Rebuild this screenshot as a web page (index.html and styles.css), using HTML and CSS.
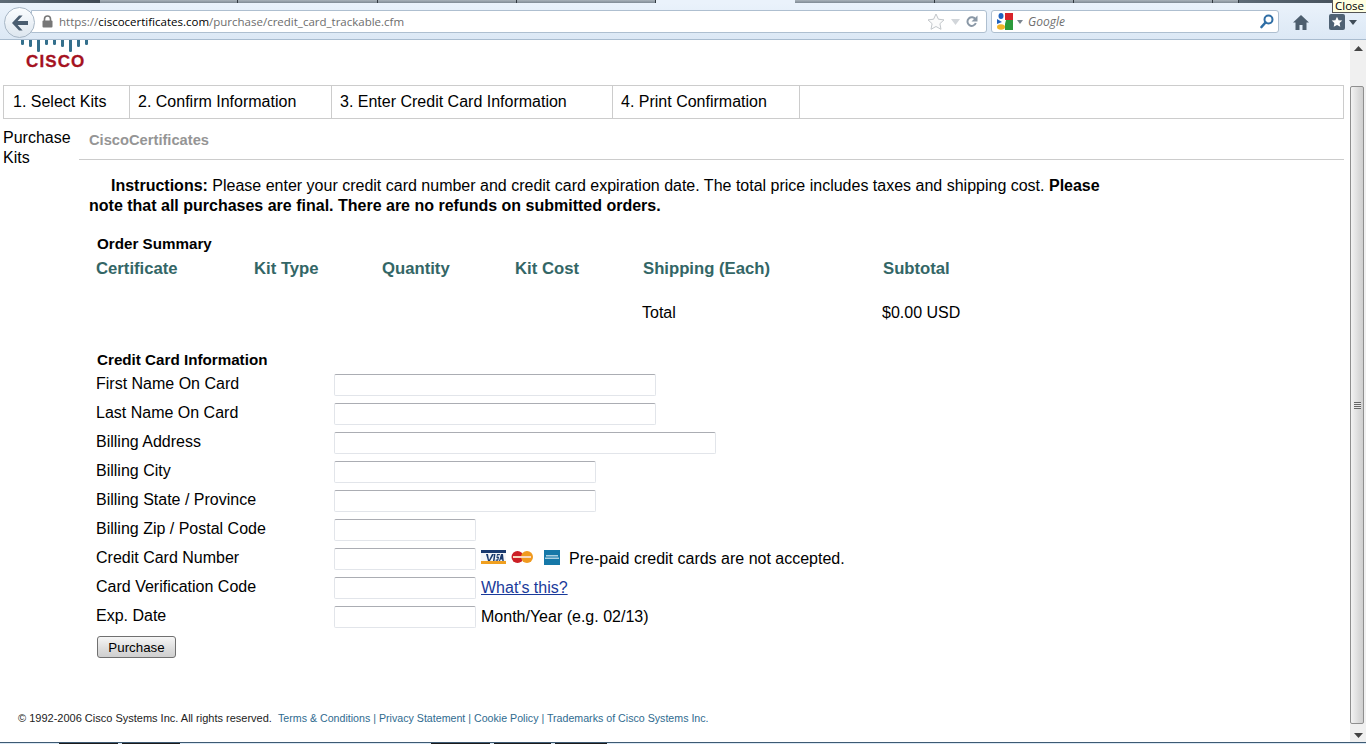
FILE: index.html
```html
<!DOCTYPE html>
<html lang="en">
<head>
<meta charset="utf-8">
<title>Purchase Kits</title>
<link rel="stylesheet" href="styles.css">
</head>
<body>
<div class="window">
  <div class="tabstrip">
    <span class="tab tab-dark w100"></span>
    <span class="tab w138"></span>
    <span class="tab w140"></span>
    <span class="tab w139"></span>
    <span class="tab w139"></span>
    <span class="tab tab-active w139"></span>
    <span class="tab w140"></span>
    <span class="tab w139"></span>
    <span class="tab w139"></span>
    <span class="tab w26"></span>
    <span class="tab tab-dark fill"></span>
  </div>
  <div class="tooltip">Close</div>
  <div class="navbar">
    <div class="back">
      <svg width="20" height="18" viewBox="0 0 20 18"><path d="M9 1.5 2 9l7 7.5h3.6L7.6 11H18V7H7.6l5-5.500z" fill="#4a5d70"/></svg>
    </div>
    <div class="urlbar">
      <svg class="lock" width="11" height="13" viewBox="0 0 11 13"><path d="M2.500 6V4a3 3 0 0 1 6 0v2" fill="none" stroke="#777" stroke-width="1.600"/><rect x="0.500" y="5.500" width="10" height="7" rx="1" fill="#777"/></svg>
      <span class="url"><span class="url-dim">https://</span>ciscocertificates.com<span class="url-dim">/purchase/credit_card_trackable.cfm</span></span>
      <svg class="star" width="18" height="17" viewBox="0 0 18 17"><path d="M9 1l2.400 5.200 5.600.7-4.100 3.800 1.100 5.600L9 13.500l-5 2.800 1.100-5.600L1 6.900l5.600-.7z" fill="#fbfbfb" stroke="#c2c6ca"/></svg>
      <svg class="drop" width="11" height="8" viewBox="0 0 11 8"><path d="M1 1h9L5.500 7z" fill="#d2d6da"/></svg>
      <svg class="reload" width="13" height="13" viewBox="0 0 13 13"><path d="M10.500 4.500A4.300 4.300 0 1 0 10.800 8" fill="none" stroke="#8a98a6" stroke-width="2"/><path d="M12.500 0.500v6h-6z" fill="#8a98a6"/></svg>
    </div>
    <div class="searchbar">
      <svg class="glogo" width="16" height="17" viewBox="0 0 16 17"><path d="M8 0h8v7H8z" fill="#d8232a"/><path d="M9 7h7v10H8v-6z" fill="#2c9a3c"/><ellipse cx="4" cy="3" rx="2.500" ry="3" fill="#1f63c0"/><path d="M0 6l5 3-5 2z" fill="#1f63c0"/><ellipse cx="4" cy="14" rx="4" ry="2.800" fill="#f0b429"/></svg>
      <svg class="gdrop" width="6" height="4" viewBox="0 0 6 4"><path d="M0 0h6L3 4z" fill="#7a8590"/></svg>
      <span class="engine">Google</span>
      <svg class="lens" width="14" height="15" viewBox="0 0 14 15"><circle cx="8.500" cy="5.500" r="4" fill="none" stroke="#2f6ea5" stroke-width="2"/><path d="M5.500 8.500 1.500 13" stroke="#2f6ea5" stroke-width="2.600" stroke-linecap="round"/></svg>
    </div>
    <svg class="home" width="16" height="15" viewBox="0 0 16 15"><path d="M8 0 0 7.500h2.500V15H6.500v-5h3v5h4V7.500H16z" fill="#4d5e6e"/></svg>
    <div class="bookmarks">
      <span class="bm-box"><svg width="12" height="12" viewBox="0 0 12 12"><path d="M6 .8l1.600 3.400 3.700.4-2.700 2.500.7 3.700L6 9 2.700 10.800l.7-3.700L.7 4.600l3.700-.4z" fill="#fff"/></svg></span>
      <svg width="8" height="5" viewBox="0 0 8 5"><path d="M0 0h8L4 5z" fill="#3f4c58"/></svg>
    </div>
  </div>
  <div class="viewport">
    <div class="page">
      <div class="logo">
        <svg class="logo-bars" width="68" height="12" viewBox="0 0 68 12">
          <g fill="#346f8c">
            <rect x="0" y="-2" width="3" height="7" rx="1.200"/><rect x="8" y="-2" width="3" height="9" rx="1.200"/><rect x="16" y="-2" width="3" height="14" rx="1.200"/><rect x="24" y="-2" width="3" height="7" rx="1.200"/><rect x="32" y="-2" width="3" height="7" rx="1.200"/><rect x="40" y="-2" width="3" height="9" rx="1.200"/><rect x="48" y="-2" width="3" height="14" rx="1.200"/><rect x="56" y="-2" width="3" height="9" rx="1.200"/><rect x="64" y="-2" width="3" height="7" rx="1.200"/>
          </g>
        </svg>
        <div class="logo-word">CISCO</div>
      </div>
      <div class="steps">
        <div class="step s1">1. Select Kits</div>
        <div class="step s2">2. Confirm Information</div>
        <div class="step s3">3. Enter Credit Card Information</div>
        <div class="step s4">4. Print Confirmation</div>
        <div class="step s5"></div>
      </div>
      <div class="columns">
        <div class="side">Purchase Kits</div>
        <div class="main">
          <div class="site-title">CiscoCertificates</div>
          <p class="instructions"><b>Instructions:</b> Please enter your credit card number and credit card expiration date. The total price includes taxes and shipping cost. <b>Please note that all purchases are final. There are no refunds on submitted orders.</b></p>
          <div class="section-title order-title">Order Summary</div>
          <div class="order-grid order-head">
            <span>Certificate</span><span>Kit Type</span><span>Quantity</span><span>Kit Cost</span><span>Shipping (Each)</span><span>Subtotal</span>
          </div>
          <div class="order-grid order-total">
            <span class="total-label">Total</span><span>$0.00 USD</span>
          </div>
          <div class="section-title card-title">Credit Card Information</div>
          <form class="card-form">
            <div class="row"><label>First Name On Card</label><input class="w322" type="text"></div>
            <div class="row"><label>Last Name On Card</label><input class="w322" type="text"></div>
            <div class="row"><label>Billing Address</label><input class="w382" type="text"></div>
            <div class="row"><label>Billing City</label><input class="w262" type="text"></div>
            <div class="row"><label>Billing State / Province</label><input class="w262" type="text"></div>
            <div class="row"><label>Billing Zip / Postal Code</label><input class="w142" type="text"></div>
            <div class="row"><label>Credit Card Number</label><input class="w142" type="text">
              <svg class="cards" width="84" height="16" viewBox="0 0 84 16">
                <rect x="0" y="0" width="25" height="3" fill="#1a3a6e"/><rect x="0" y="3" width="25" height="8" fill="#f4f6f8"/><rect x="0" y="11" width="25" height="3" fill="#f0a020"/>
                <path d="M5 4h2l1 6 3-6h2l-4 7H7zM13 4h1.500l-1 7H12zM16 4h3l-.3 1.300h-2l-.2 1.500h1.600l-.9 4h-2.700l.3-1.200h1.500l.3-1.700h-1.200zM20 4h2l.8 7h-1.500l-.1-1.500h-1.500l-.7 1.500H18z" fill="#1a3a6e"/>
                <circle cx="36.500" cy="7" r="6" fill="#cc1f25"/><circle cx="46" cy="7" r="6" fill="#f09a1f"/><rect x="32" y="6" width="18" height="2" fill="#f7d9c0"/>
                <rect x="63" y="0" width="16" height="15" fill="#1578a8"/><rect x="65" y="5" width="12" height="1.500" fill="#a9d0e2"/><rect x="64" y="7.500" width="14" height="1.500" fill="#a9d0e2"/>
              </svg>
              <span class="after-cards">Pre-paid credit cards are not accepted.</span>
            </div>
            <div class="row"><label>Card Verification Code</label><input class="w142" type="text"><a class="after-input link" href="#">What's this?</a></div>
            <div class="row"><label>Exp. Date</label><input class="w142" type="text"><span class="after-input">Month/Year (e.g. 02/13)</span></div>
            <button class="purchase" type="button">Purchase</button>
          </form>
          <div class="footer-spacer"></div>
        </div>
      </div>
      <div class="footer">© 1992-2006 Cisco Systems Inc. All rights reserved.&nbsp; <span class="footer-links"><a href="#">Terms &amp; Conditions</a> | <a href="#">Privacy Statement</a> | <a href="#">Cookie Policy</a> | <a href="#">Trademarks of Cisco Systems Inc.</a></span></div>
    </div>
    <div class="scrollbar">
      <div class="sb-btn"><svg width="9" height="5" viewBox="0 0 9 5"><path d="M0 5h9L4.500 0z" fill="#444"/></svg></div>
      <div class="sb-thumb"><span class="grip"></span></div>
      <div class="sb-btn sb-down"><svg width="9" height="5" viewBox="0 0 9 5"><path d="M0 0h9L4.500 5z" fill="#444"/></svg></div>
    </div>
  </div>
  <div class="taskbar">
    <span class="tb w59"></span><span class="tb tb-dark w59"></span><span class="tb w4"></span><span class="tb tb-dark w58"></span><span class="tb w251"></span><span class="tb tb-dark w59"></span><span class="tb w4"></span><span class="tb tb-dark w57"></span><span class="tb w4"></span><span class="tb tb-dark w52"></span><span class="tb fill"></span>
  </div>
</div>
</body>
</html>
```
FILE: styles.css
```css
* { box-sizing: border-box; }
html, body { margin: 0; padding: 0; height: 100%; overflow: hidden; background: #fff; }
body { font-family: "Liberation Sans", Arial, sans-serif; font-size: 16px; color: #000; }

.window { position: relative; width: 1366px; height: 744px; display: flex; flex-direction: column; overflow: hidden; }

/* tab strip remains */
.tabstrip { display: flex; height: 3px; flex: none; background: #eaf2fb; }
.tab { display: block; height: 3px; background: linear-gradient(#a9b2ba, #7f8a94); border-right: 1px solid #30383f; }
.tab-dark { background: linear-gradient(90deg, #5d6a76, #3f4a55); border-right: 0; }
.tab-active { background: #eaf2fb; border-right: 0; }
.w100 { width: 100px; } .w138 { width: 138px; } .w140 { width: 140px; } .w139 { width: 139px; } .w26 { width: 26px; }
.tabstrip .fill { flex: 1; }

.tooltip { position: absolute; left: 1332px; top: -1px; width: 34px; height: 14px; background: #ffffe1; border: 1px solid #555; border-right: 0; font: 11.500px/11px "Open Sans", sans-serif; padding-left: 2px; color: #000; z-index: 3; white-space: nowrap; }

/* navigation toolbar */
.navbar { flex: none; height: 37px; display: flex; align-items: flex-start; padding: 7px 0 0 4px; background: linear-gradient(#eaf2fb, #dce8f5); border-bottom: 1px solid #a9bccf; }
.back { position: relative; z-index: 2; flex: none; width: 31px; height: 31px; margin-top: -3px; border-radius: 50%; border: 1px solid #a8b7c6; background: linear-gradient(#fbfdff, #dde6ef); display: flex; align-items: center; justify-content: center; }
.urlbar { flex: none; width: 956px; height: 23px; margin-left: -4px; padding: 0 8px 0 10px; display: flex; align-items: center; background: #fff; border: 1px solid #aebfd0; border-radius: 0 3px 3px 0; }
.lock { flex: none; }
.url { flex: 1; margin-left: 6px; font: 11.500px/20px "Open Sans", sans-serif; color: #000; white-space: nowrap; }
.url-dim { color: #6d6d6d; }
.star { flex: none; }
.drop { flex: none; margin-left: 5px; }
.reload { flex: none; margin-left: 4px; }
.searchbar { flex: none; width: 288px; height: 23px; margin-left: 4px; padding: 0 4px 0 5px; display: flex; align-items: center; background: #fff; border: 1px solid #aebfd0; border-radius: 3px; }
.glogo { flex: none; }
.gdrop { flex: none; margin-left: 4px; }
.engine { flex: 1; margin-left: 5px; font: italic 12px/20px "Open Sans", sans-serif; color: #6f6f6f; }
.lens { flex: none; }
.home { flex: none; margin: 5px 0 0 14px; }
.bookmarks { flex: none; margin: 4px 0 0 20px; display: flex; align-items: center; gap: 4px; }
.bm-box { width: 16px; height: 16px; border-radius: 2px; background: #4f6274; display: flex; align-items: center; justify-content: center; }

/* viewport */
.viewport { flex: 1; min-height: 0; display: flex; }
.page { flex: 1; min-width: 0; padding: 0 6px 0 3px; }

.logo { height: 45px; padding-left: 18px; }
.logo-bars { display: block; }
.logo-word { width: 62px; margin: 2px 0 0 5px; font-size: 17px; line-height: 16px; font-weight: bold; letter-spacing: 1.100px; color: #a5121f; -webkit-text-stroke: 0.300px #a5121f; }

.steps { display: flex; height: 34px; border: 1px solid #ccc; line-height: 32px; }
.step { flex: none; padding-left: 8px; border-right: 1px solid #ccc; white-space: nowrap; }
.s1 { width: 126px; padding-left: 9px; } .s2 { width: 202px; } .s3 { width: 281px; } .s4 { width: 187px; }
.s5 { flex: 1; border-right: 0; }

.columns { display: flex; }
.side { flex: none; width: 76px; padding-top: 9px; line-height: 20px; }
.main { flex: 1; min-width: 0; }

.site-title { margin-top: 11px; padding: 0 0 9px 10px; line-height: 20px; font-size: 14.700px; font-weight: bold; color: #959595; border-bottom: 1px solid #ccc; }
.instructions { width: 1035px; margin: 16px 0 0; padding-left: 10px; text-indent: 22px; line-height: 20px; }

.section-title { padding-left: 18px; font-size: 15.200px; font-weight: bold; line-height: 20px; }
.order-title { margin-top: 18px; }
.card-title { margin-top: 27px; }

.order-grid { display: grid; grid-template-columns: 158px 128px 133px 128px 240px auto; line-height: 20px; }
.order-head { margin-top: 5px; padding-left: 17px; font-size: 16.700px; font-weight: bold; color: #336666; }
.order-total { margin-top: 24px; padding-left: 16px; }
.total-label { grid-column: 5; }

.card-form { margin-top: 4px; padding-left: 17px; }
.row { display: flex; align-items: flex-start; height: 29px; line-height: 20px; }
.row label { flex: none; width: 238px; }
.row input { flex: none; height: 22px; margin: 0; padding: 0 2px; border: 1px solid #e2e5ea; border-top-color: #abadb3; border-radius: 2px; background: #fff; }
.w322 { width: 322px; } .w382 { width: 382px; } .w262 { width: 262px; } .w142 { width: 142px; }
.cards { flex: none; margin: 2px 0 0 5px; }
.after-cards { margin: 1px 0 0 4px; white-space: nowrap; }
.after-input { margin: 1px 0 0 5px; white-space: nowrap; }
.link { color: #1a3a9a; text-decoration: underline; }

.purchase { display: block; width: 79px; height: 22px; margin: 1px 0 0 1px; padding: 0; font: 13.333px "Liberation Sans", Arial, sans-serif; color: #000; background: linear-gradient(#f6f6f6, #dcdcdc 60%, #cfcfcf); border: 1px solid #707070; border-radius: 3px; }

.footer-spacer { height: 54px; }
.footer { padding-left: 15px; font-size: 11px; line-height: 13px; color: #222; white-space: nowrap; }
.footer-links { font-size: 10.650px; color: #2f6b8f; }
.footer a { color: #2f6b8f; text-decoration: none; }

/* scrollbar */
.scrollbar { flex: none; width: 16px; display: flex; flex-direction: column; background: #f0f0f0; }
.sb-btn { flex: none; height: 17px; display: flex; align-items: center; justify-content: center; }
.sb-down { height: 18px; padding-top: 4px; }
.sb-thumb { flex: 1; margin: 29px 2px 0 0; display: flex; align-items: center; justify-content: center; background: linear-gradient(90deg, #f3f3f3, #dcdcdc 60%, #cfcfcf); border: 1px solid #8f8f8f; border-radius: 2px; }
.grip { display: block; width: 7px; height: 7px; background: repeating-linear-gradient(#666 0 1px, #e8e8e8 1px 2px); }

/* taskbar edge */
.taskbar { flex: none; height: 2px; display: flex; background: #dbe8f4; border-top: 1px solid #3d5a73; }
.tb { display: block; height: 1px; background: #dbe8f4; }
.tb-dark { background: #1a1a1a; }
.w59 { width: 59px; } .w4 { width: 4px; } .w58 { width: 58px; } .w251 { width: 251px; } .w57 { width: 57px; } .w52 { width: 52px; }
.taskbar .fill { flex: 1; }
```
